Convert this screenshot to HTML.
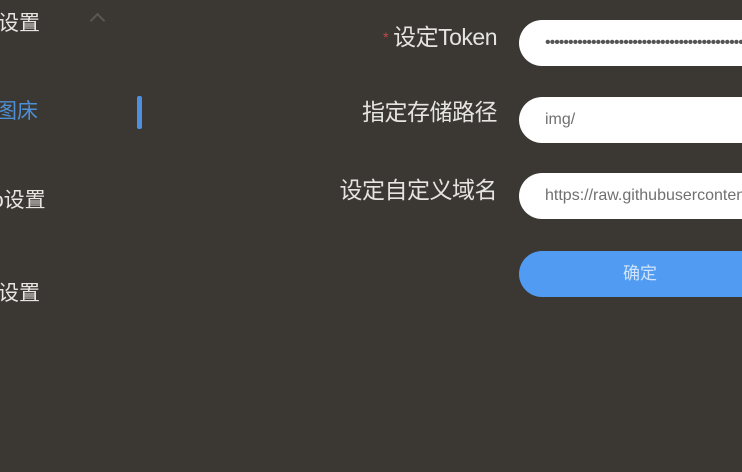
<!DOCTYPE html>
<html><head><meta charset="utf-8"><style>
body{margin:0;width:742px;height:472px;background:#3b3834;overflow:hidden;position:relative;font-family:"Liberation Sans","Noto Sans CJK SC",sans-serif}
.t{position:absolute;color:#e8e6e3;font-size:21px;line-height:24px;white-space:nowrap}
.lab{position:absolute;right:245px;color:#e6e4e1;font-size:23px;line-height:26px;white-space:nowrap;letter-spacing:-0.5px}
.in{position:absolute;left:519px;width:260px;height:46px;background:#fff;border-radius:23px;box-sizing:border-box;padding-left:26px;line-height:46px;font-size:16px;color:#707070;white-space:nowrap;overflow:hidden}
</style></head><body>
<div class="t" style="left:-2px;top:12px">设置</div>
<div style="position:absolute;left:92px;top:15px;width:9px;height:9px;border-left:2px solid #5a5753;border-top:2px solid #5a5753;transform:rotate(45deg)"></div>
<div class="t" style="left:-4px;top:100px;color:#4e8fd6">图床</div>
<div style="position:absolute;left:137px;top:96px;width:5px;height:33px;background:#4f8fe0;border-radius:2px"></div>
<div class="t" style="left:-8px;top:189px">o设置</div>
<div class="t" style="left:-2px;top:282px">设置</div>

<div class="lab" style="top:24px"><span style="color:#c24a4a;font-size:14px;vertical-align:top;margin-right:5px">*</span>设定Token</div>
<div class="lab" style="top:99px">指定存储路径</div>
<div class="lab" style="top:177px">设定自定义域名</div>

<div class="in" style="top:20px;letter-spacing:-1px;color:#555">••••••••••••••••••••••••••••••••••••••••••••</div>
<div class="in" style="top:97px">img/</div>
<div class="in" style="top:173px">https://raw.githubusercontent.com</div>
<div class="in" style="top:251px;background:#519cf2;color:#cfe4fb;padding-left:104px;font-size:17px">确定</div>
</body></html>
